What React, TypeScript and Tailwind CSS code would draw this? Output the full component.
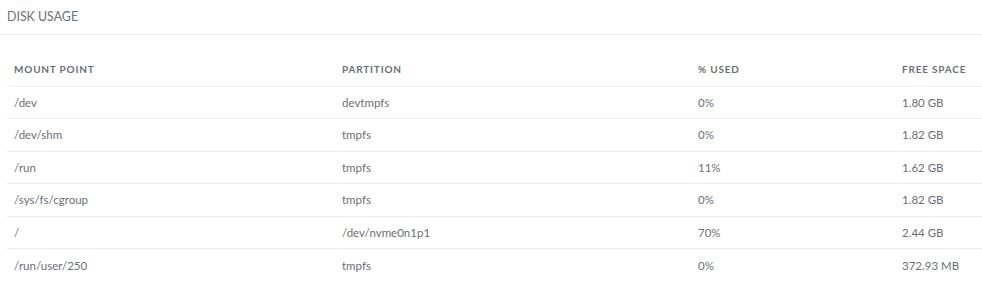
const rows = [
  ["/dev", "devtmpfs", "0%", "1.80 GB"],
  ["/dev/shm", "tmpfs", "0%", "1.82 GB"],
  ["/run", "tmpfs", "11%", "1.62 GB"],
  ["/sys/fs/cgroup", "tmpfs", "0%", "1.82 GB"],
  ["/", "/dev/nvme0n1p1", "70%", "2.44 GB"],
  ["/run/user/250", "tmpfs", "0%", "372.93 MB"],
];

export default function App() {
  return (
    <div className="w-[982px] h-[291px] bg-white text-[#6c6f76]" style={{ fontFamily: "Lato, 'Noto Sans', sans-serif" }}>
      <div className="h-[35px] border-b border-[#eceef3] pl-[7px] pt-[8px] text-[12.4px]">DISK USAGE</div>
      <div className="pl-[7px] pt-[18px]">
        <table className="w-full border-collapse text-[11.5px]">
          <thead>
            <tr className="h-[33px] border-b border-[#eceef3] text-[10px] font-bold tracking-[0.08em] text-left">
              <th className="pl-[7px] w-[328px]">MOUNT POINT</th>
              <th className="pl-[7px] w-[356px]">PARTITION</th>
              <th className="pl-[7px] w-[204px]">% USED</th>
              <th className="pl-[7px]">FREE SPACE</th>
            </tr>
          </thead>
          <tbody>
            {rows.map((r, i) => (
              <tr key={i} className={`h-[32.6px] ${i < rows.length - 1 ? "border-b border-[#eceef3]" : ""}`}>
                {r.map((c, j) => <td key={j} className="pl-[7px]">{c}</td>)}
              </tr>
            ))}
          </tbody>
        </table>
      </div>
    </div>
  );
}
